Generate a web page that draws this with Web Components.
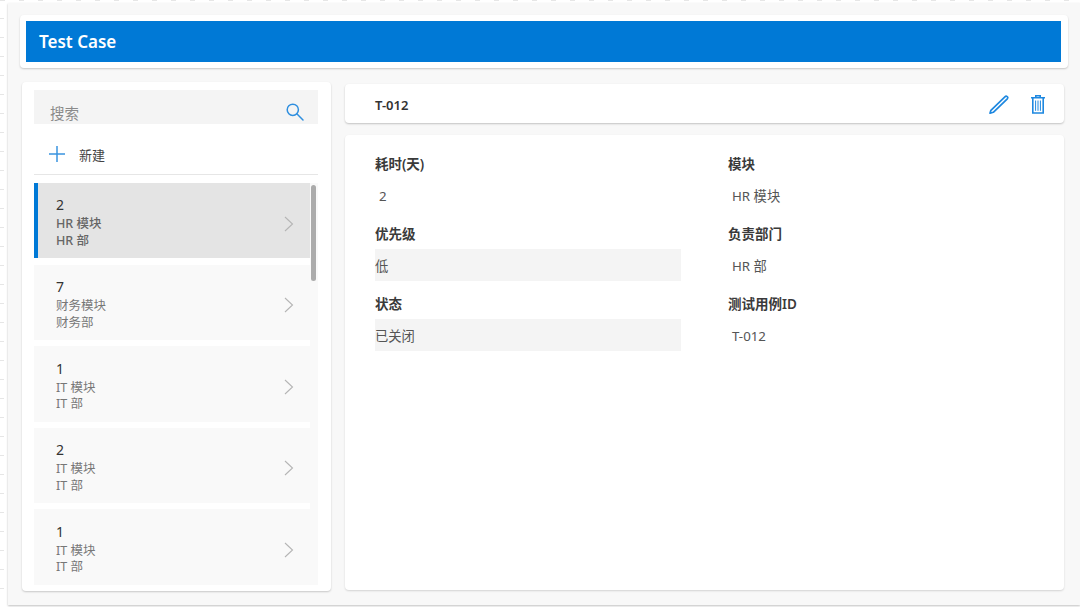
<!DOCTYPE html>
<html><head><meta charset="utf-8">
<style>
html,body{margin:0;padding:0;width:1080px;height:607px;overflow:hidden}
body{font-family:"Noto Sans","Noto Sans CJK SC",sans-serif;color:#333;
background-color:#fff;
background-image:repeating-linear-gradient(90deg,#e6e6e6 0 5px,transparent 5px 19px),repeating-linear-gradient(180deg,#e6e6e6 0 1px,transparent 1px 19px);
background-size:100% 1px,4px 100%;background-repeat:no-repeat;background-position:0 0,0 18px}
</style></head><body>
<tc-app></tc-app>
<template id="t-app"><style>
:host{display:flex;flex-direction:column;box-sizing:border-box;margin:3px 0 0 8px;width:1072px;height:602px;background:#f8f8f8;box-shadow:0 1px 2px rgba(0,0,0,.25);padding:12px 12px 0 12px}
.head{margin-bottom:14px;flex:none}
.cols{display:flex;align-items:flex-start}
</style>
<tc-header class="head">Test Case</tc-header>
<div class="cols"><tc-master></tc-master><tc-detail></tc-detail></div>
</template>

<template id="t-header"><style>
:host{display:block;box-sizing:border-box;width:1048px;height:53px;padding:6px 7px 6px 6px;background:#fff;border-radius:4px;box-shadow:0 1px 2px rgba(0,0,0,.2)}
div{height:41px;background:#0079d6;color:#fff;font-size:17px;font-weight:600;line-height:42px;padding-left:13px}
</style><div><slot></slot></div></template>

<template id="t-master"><style>
:host{display:flex;flex-direction:column;box-sizing:border-box;width:309px;height:509px;margin:0 14px 0 2px;padding:8px 13px 6px 12px;background:#fff;border-radius:4px;box-shadow:0 1px 2px rgba(0,0,0,.2)}
.search{display:flex;align-items:center;justify-content:space-between;height:34px;flex:none;background:#f4f4f4;padding:1px 13px 0 16px;box-sizing:border-box;color:#8a8a8a;font-size:14.5px;line-height:34px;overflow:hidden}
.search span{position:relative;top:5px}
.search svg{position:relative;top:4px}
.new{display:flex;align-items:center;gap:14px;height:51px;flex:none;box-sizing:border-box;border-bottom:1px solid #e6e6e6;padding:10px 0 0 15px;font-size:13px;color:#444}
.listwrap{display:flex;margin-top:8px;height:402px;overflow:hidden;flex:none;background:#f9f9f9}
.list{width:276px;display:flex;flex-direction:column;gap:6px;flex:none;background:#fff}
.track{flex:1;padding:2px 2px 0 1px}
.thumb{height:96px;background:#ababab;border-radius:3px}
</style>
<div class="search"><span>搜索</span><svg width="20" height="20" viewBox="0 0 20 20" fill="none" stroke="#2f8fdf" stroke-width="1.5"><circle cx="7.8" cy="7.8" r="5.6"/><path d="M11.8 11.8 L18 18" stroke-linecap="round"/></svg></div>
<div class="new"><svg width="16" height="16" viewBox="0 0 16 16" stroke="#3a94e0" stroke-width="1.5"><path d="M8 0V16M0 8H16"/></svg><span>新建</span></div>
<div class="listwrap"><div class="list">
<tc-item selected n="2" a="HR 模块" b="HR 部"></tc-item>
<tc-item n="7" a="财务模块" b="财务部"></tc-item>
<tc-item n="1" a="IT 模块" b="IT 部"></tc-item>
<tc-item n="2" a="IT 模块" b="IT 部"></tc-item>
<tc-item n="1" a="IT 模块" b="IT 部"></tc-item>
</div><div class="track"><div class="thumb"></div></div></div>
</template>

<template id="t-item"><style>
:host{display:flex;align-items:center;box-sizing:border-box;height:75.5px;flex:none;background:#f9f9f9;padding:0 16px 0 22px;position:relative}
:host([selected]){background:#e4e4e4;height:75px;margin-bottom:.5px}
:host([selected])::before{content:"";position:absolute;left:0;top:0;bottom:0;width:3.5px;background:#0079d6}
.t{flex:1;display:flex;flex-direction:column;padding-top:5px}
.n{font-size:14px;line-height:18px;margin-bottom:2px;color:#333}
.s{font-size:12.5px;line-height:16.75px;color:#777}
:host([selected]) .s{color:#666;font-weight:500}
svg{margin-top:6px}
</style><div class="t"><span class="n"></span><span class="s a"></span><span class="s b"></span></div>
<svg width="10" height="16" viewBox="0 0 10 16" fill="none" stroke="#b5b5b5" stroke-width="1.1"><path d="M1 1L8.5 8L1 15"/></svg></template>

<template id="t-detail"><style>
:host{display:flex;flex-direction:column;width:719px;margin-top:2px}
.bar{display:flex;align-items:center;justify-content:space-between;box-sizing:border-box;height:39px;background:#fff;border-radius:4px;box-shadow:0 1px 2px rgba(0,0,0,.22);padding:3px 19px 0 30px;font-size:13px;font-weight:600;color:#333;flex:none}
.icons{display:flex;align-items:center;gap:22px}
.icons svg{display:block;position:relative;top:-1px}
.body{box-sizing:border-box;height:455px;margin-top:12px;background:#fff;border-radius:4px;box-shadow:0 1px 2px rgba(0,0,0,.15);padding:18px 30px 0 30px;display:grid;grid-template-columns:306px 306px;column-gap:47px;grid-auto-rows:70px}
</style>
<div class="bar"><span>T-012</span><div class="icons">
<svg width="20" height="19" viewBox="0 0 20 19" fill="none" stroke="#1e88e0" stroke-width="1.7" stroke-linejoin="round"><path d="M1 18.2L1.9 15.3L15.9 1.8Q17 .8 18.2 1.6T18.3 3.8L4.3 17.3Z"/></svg>
<svg width="14" height="19" viewBox="0 0 14 19" fill="none" stroke="#1e88e0" stroke-width="1.6"><path d="M0 2.8H14M4.8 2.8V.8H9.2V2.8"/><path d="M1.8 2.8V18H12.2V2.8"/><path d="M4.6 5.5V15.8M7 5.5V15.8M9.4 5.5V15.8" stroke-width="1"/></svg>
</div></div>
<div class="body">
<tc-field label="耗时(天)" value="2"></tc-field>
<tc-field label="模块" value="HR 模块"></tc-field>
<tc-field label="优先级" value="低" filled></tc-field>
<tc-field label="负责部门" value="HR 部"></tc-field>
<tc-field label="状态" value="已关闭" filled></tc-field>
<tc-field label="测试用例ID" value="T-012"></tc-field>
</div></template>

<template id="t-field"><style>
:host{display:block}
.l{font-size:13.5px;font-weight:600;line-height:22px;color:#3a3a3a;height:26px}
.v{box-sizing:border-box;height:32px;line-height:35px;font-size:13.3px;color:#555;padding-left:4px}
:host([filled]) .v{background:#f4f4f4;padding-left:0}
</style><div class="l"></div><div class="v"></div></template>

<script>
function shadow(el,id){const r=el.attachShadow({mode:'open'});r.appendChild(document.getElementById(id).content.cloneNode(true));return r;}
class TcApp extends HTMLElement{connectedCallback(){if(!this.shadowRoot)shadow(this,'t-app');}}
class TcHeader extends HTMLElement{connectedCallback(){if(!this.shadowRoot)shadow(this,'t-header');}}
class TcMaster extends HTMLElement{connectedCallback(){if(!this.shadowRoot)shadow(this,'t-master');}}
class TcDetail extends HTMLElement{connectedCallback(){if(!this.shadowRoot)shadow(this,'t-detail');}}
class TcItem extends HTMLElement{connectedCallback(){if(this.shadowRoot)return;const r=shadow(this,'t-item');
r.querySelector('.n').textContent=this.getAttribute('n');r.querySelector('.a').textContent=this.getAttribute('a');r.querySelector('.b').textContent=this.getAttribute('b');}}
class TcField extends HTMLElement{connectedCallback(){if(this.shadowRoot)return;const r=shadow(this,'t-field');
r.querySelector('.l').textContent=this.getAttribute('label');r.querySelector('.v').textContent=this.getAttribute('value');}}
customElements.define('tc-item',TcItem);customElements.define('tc-field',TcField);
customElements.define('tc-header',TcHeader);customElements.define('tc-master',TcMaster);customElements.define('tc-detail',TcDetail);customElements.define('tc-app',TcApp);
</script>
</body></html>
